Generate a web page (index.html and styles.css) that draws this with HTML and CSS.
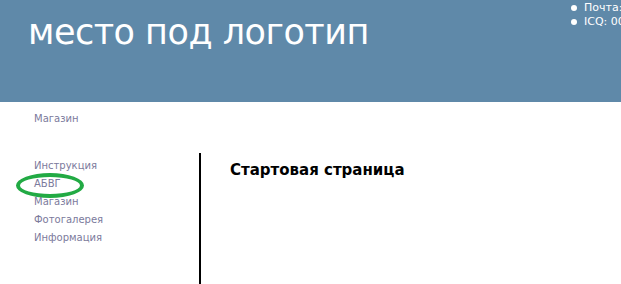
FILE: index.html
```html
<!DOCTYPE html>
<html lang="ru">
<head>
<meta charset="utf-8">
<link rel="stylesheet" href="styles.css">
</head>
<body>
<header class="header">
  <div class="logo">место под логотип</div>
  <ul class="contacts">
    <li>Почта: mail@example.ru</li>
    <li>ICQ: 000-000-000</li>
  </ul>
</header>
<div class="crumbs">Магазин</div>
<div class="main">
  <nav class="side">
    <a href="#">Инструкция</a>
    <a href="#" class="marked">АБВГ</a>
    <a href="#">Магазин</a>
    <a href="#">Фотогалерея</a>
    <a href="#">Информация</a>
  </nav>
  <section class="content">
    <h1 class="title">Стартовая страница</h1>
  </section>
</div>
</body>
</html>
```

FILE: styles.css
```css
html, body {
  margin: 0;
  padding: 0;
  background: #ffffff;
  overflow: hidden;
}
body {
  width: 621px;
  height: 284px;
  font-family: "DejaVu Sans", Verdana, sans-serif;
}
.header {
  height: 102px;
  background: #5f89a9;
  display: flex;
  justify-content: space-between;
}
.logo {
  color: #ffffff;
  font-size: 35px;
  padding: 12px 0 0 28px;
  line-height: 40px;
  letter-spacing: -0.5px;
}
.contacts {
  margin: 0;
  padding: 1px 0 0 0;
  width: 50px;
  white-space: nowrap;
  color: #ffffff;
  font-size: 11px;
  line-height: 14px;
  list-style: none;
}
.contacts li {
  position: relative;
  padding-left: 13px;
}
.contacts li::before {
  content: "";
  position: absolute;
  left: 0;
  top: 4px;
  width: 6px;
  height: 6px;
  border-radius: 50%;
  background: #ffffff;
}
.crumbs {
  padding: 10px 0 0 34px;
  height: 41px;
  font-size: 10px;
  line-height: 14px;
  color: #7b7a9c;
}
.main {
  display: flex;
}
.side {
  width: 201px;
  padding: 4px 0 0 34px;
  box-sizing: border-box;
  display: flex;
  flex-direction: column;
  height: 131px;
  border-right: 2px solid #000;
}
.side a {
  color: #7b7a9c;
  text-decoration: none;
  font-size: 10px;
  line-height: 18px;
  position: relative;
  align-self: flex-start;
}
.side a.marked::after {
  content: "";
  position: absolute;
  left: -18px;
  top: -2px;
  width: 60px;
  height: 17px;
  border: 4px solid #22aa44;
  border-radius: 50%;
}
.content {
  padding-left: 29px;
}
.title {
  margin: 8px 0 0 0;
  font-size: 15px;
  font-weight: bold;
  line-height: 18px;
  color: #000;
}
```
